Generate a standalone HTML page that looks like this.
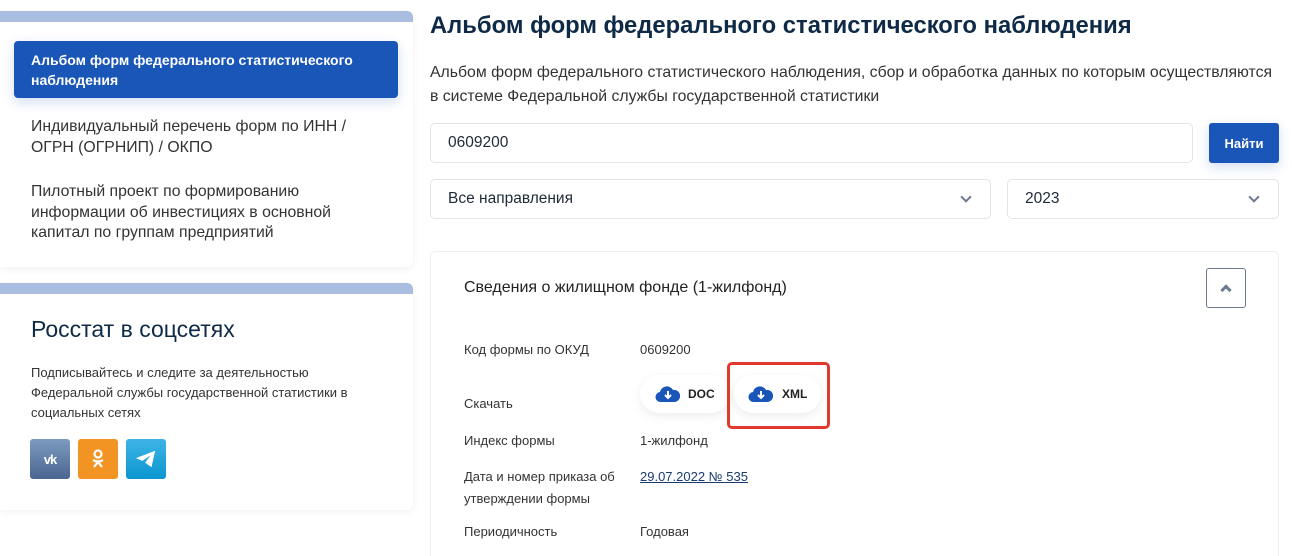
<!DOCTYPE html>
<html style="height:556px;overflow:hidden"><head><meta charset="utf-8"><style>
*{box-sizing:border-box;margin:0;padding:0}
body{width:1292px;height:556px;overflow:hidden;background:#fff;font-family:"Liberation Sans","DejaVu Sans",sans-serif;color:#1f2937;position:relative}
.a{position:absolute}
.card{background:#fff;border-radius:0 6px 6px 0;box-shadow:0 2px 8px rgba(0,0,0,.06)}
.bar{background:#a9bde0;height:11px;border-radius:0 6px 0 0}
.inp{border:1px solid #e2e5ea;border-radius:5px;background:#fff}
.lbl{font-size:13px;color:#333}
.chev{width:8px;height:8px;border-right:2px solid #6b7a90;border-bottom:2px solid #6b7a90;transform:rotate(45deg)}
.pill{background:#fff;border-radius:20px;box-shadow:0 3px 10px rgba(0,0,0,.08);height:38px;display:flex;align-items:center;font-weight:bold;font-size:12px;color:#222}
.soc{width:40px;height:40px;border-radius:3px;display:flex;align-items:center;justify-content:center;color:#fff;font-weight:bold}
</style></head><body>
<div class="a card" style="left:0;top:11px;width:413px;height:256px">
<div class="bar"></div>
<div class="a" style="left:14px;top:30px;width:384px;height:57px;background:#1a56b8;border-radius:4px;box-shadow:0 4px 12px rgba(26,86,184,.2);color:#fff;font-weight:bold;font-size:14px;line-height:20px;padding:9px 17px">Альбом форм федерального статистического наблюдения</div>
<div class="a" style="left:31px;top:105px;font-size:15.8px;line-height:21px;color:#333;white-space:nowrap">Индивидуальный перечень форм по ИНН /<br>ОГРН (ОГРНИП) / ОКПО</div>
<div class="a" style="left:31px;top:171px;font-size:15.8px;line-height:20.5px;color:#333;white-space:nowrap">Пилотный проект по формированию<br>информации об инвестициях в основной<br>капитал по группам предприятий</div>
</div>
<div class="a card" style="left:0;top:283px;width:413px;height:227px">
<div class="bar"></div>
<div class="a" style="left:31px;top:33px;font-size:23px;color:#0e2a47">Росстат в соцсетях</div>
<div class="a" style="left:31px;top:80px;font-size:13px;line-height:20px;color:#333;white-space:nowrap">Подписывайтесь и следите за деятельностью<br>Федеральной службы государственной статистики в<br>социальных сетях</div>
<div class="a soc" style="left:30px;top:156px;background:linear-gradient(#7d9bc0,#4a6590);font-size:13px;letter-spacing:-1px">vk</div>
<div class="a soc" style="left:78px;top:156px;background:#f29423"><svg width="14" height="20" viewBox="0 0 14 20"><circle cx="7" cy="5" r="3.5" fill="none" stroke="#fff" stroke-width="2.2"/><path d="M2 11q5 3 10 0M7 13l-4 5M7 13l4 5" stroke="#fff" stroke-width="2.2" fill="none"/></svg></div>
<div class="a soc" style="left:126px;top:156px;background:linear-gradient(#3fb4e6,#0a96cf)"><svg width="22" height="20" viewBox="0 0 24 20"><path d="M1 9L22 1L18 19L11 14L17 6L8 12Z" fill="#fff"/></svg></div>
</div>
<div class="a" style="left:430px;top:12px;font-size:23.8px;font-weight:bold;color:#0e2a47;white-space:nowrap">Альбом форм федерального статистического наблюдения</div>
<div class="a" style="left:430px;top:61px;font-size:15.8px;line-height:24px;color:#333;white-space:nowrap">Альбом форм федерального статистического наблюдения, сбор и обработка данных по которым осуществляются<br>в системе Федеральной службы государственной статистики</div>
<div class="a inp" style="left:430px;top:123px;width:763px;height:40px;padding:10px 17px;font-size:15.5px">0609200</div>
<div class="a" style="left:1209px;top:123px;width:70px;height:40px;background:#1a56b8;border-radius:3px;color:#fff;font-weight:bold;font-size:13px;display:flex;align-items:center;justify-content:center;box-shadow:0 4px 12px rgba(26,86,184,.2)">Найти</div>
<div class="a inp" style="left:430px;top:179px;width:561px;height:40px;padding:10px 17px;font-size:15.5px">Все направления<div class="a chev" style="right:20px;top:13px"></div></div>
<div class="a inp" style="left:1007px;top:179px;width:272px;height:40px;padding:10px 17px;font-size:15.5px">2023<div class="a chev" style="right:20px;top:13px"></div></div>
<div class="a" style="left:430px;top:251px;width:849px;height:305px;border:1px solid #eceef2;border-bottom:none;border-radius:5px 5px 0 0"></div>
<div class="a" style="left:464px;top:279px;font-size:16px;color:#222">Сведения о жилищном фонде (1-жилфонд)</div>
<div class="a" style="left:1206px;top:268px;width:40px;height:40px;border:1px solid #6b7a90;border-radius:3px"><div class="a chev" style="left:15px;top:17px;transform:rotate(225deg);border-width:3px"></div></div>
<div class="a lbl" style="left:464px;top:342px">Код формы по ОКУД</div>
<div class="a lbl" style="left:640px;top:342px">0609200</div>
<div class="a lbl" style="left:464px;top:396px">Скачать</div>
<div class="a pill" style="left:640px;top:375px;width:90px;padding-left:15px"><svg width="26" height="18" viewBox="0 0 26 18"><path d="M6 17a5 5 0 0 1-1-10 7 7 0 0 1 13-2 6 6 0 0 1 2 12Z" fill="#1a56b8"/><path d="M13 6v7M10 10l3 3 3-3" stroke="#fff" stroke-width="2" fill="none"/></svg><span style="margin-left:7px">DOC</span></div>
<div class="a pill" style="left:734px;top:375px;width:87px;padding-left:14px"><svg width="26" height="18" viewBox="0 0 26 18"><path d="M6 17a5 5 0 0 1-1-10 7 7 0 0 1 13-2 6 6 0 0 1 2 12Z" fill="#1a56b8"/><path d="M13 6v7M10 10l3 3 3-3" stroke="#fff" stroke-width="2" fill="none"/></svg><span style="margin-left:8px">XML</span></div>
<div class="a" style="left:727px;top:362px;width:103px;height:67px;border:3px solid #e03a2e;border-radius:5px"></div>
<div class="a lbl" style="left:464px;top:433px">Индекс формы</div>
<div class="a lbl" style="left:640px;top:433px">1-жилфонд</div>
<div class="a lbl" style="left:464px;top:466px;line-height:22px">Дата и номер приказа об<br>утверждении формы</div>
<div class="a lbl" style="left:640px;top:469px;color:#1a3a70;text-decoration:underline">29.07.2022 № 535</div>
<div class="a lbl" style="left:464px;top:524px">Периодичность</div>
<div class="a lbl" style="left:640px;top:524px">Годовая</div>
</body></html>
